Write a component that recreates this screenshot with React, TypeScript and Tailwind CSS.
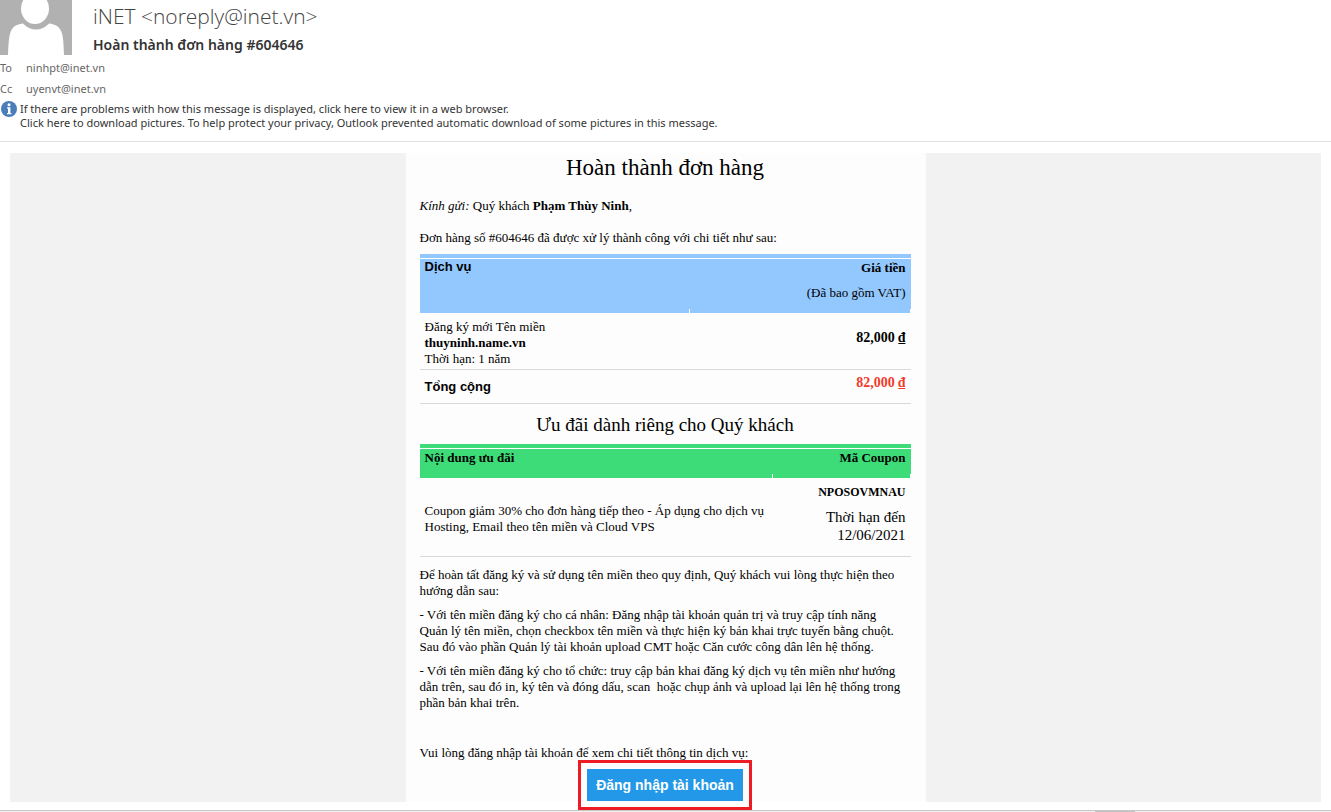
import type { ReactNode } from "react";

const notices = [
  "If there are problems with how this message is displayed, click here to view it in a web browser.",
  "Click here to download pictures. To help protect your privacy, Outlook prevented automatic download of some pictures in this message.",
];

const Avatar = () => (
  <svg viewBox="0 0 72 55" className="h-[55px] w-[72px] shrink-0" aria-hidden="true">
    <rect width="72" height="55" fill="#b1b1b1" />
    <ellipse cx="35" cy="8.500" rx="14" ry="15.500" fill="#fff" />
    <path
      d="M8 55 C8.500 43 9 35 11 31 C13 26 18 24 23 23.500 C27 27.500 31 29.500 36 29.500 C41 29.500 45 27.500 49 23.500 C54 24 59 26 61 31 C63.500 36 63.500 44 64 55 Z"
      fill="#fff"
    />
  </svg>
);

const InfoIcon = () => (
  <svg viewBox="0 0 16 16" className="h-4 w-4 shrink-0" aria-hidden="true">
    <circle cx="8" cy="8" r="8" fill="#4a7ebb" />
    <circle cx="8" cy="3.800" r="1.500" fill="#fff" />
    <path d="M6 6.200h3.400v5.800h1v1.200H6v-1.200h1V7.400H6z" fill="#fff" />
  </svg>
);

const MailHeader = () => (
  <header className="border-b border-[#e1e1e1] pb-[11px] font-['Noto_Sans','Open_Sans',sans-serif] text-[11px] text-[#666]">
    <div className="flex gap-[21px]">
      <Avatar />
      <div>
        <h1 className="pt-[3px] font-['Open_Sans',sans-serif] text-[21px] leading-[26px] font-light text-[#444]">
          iNET &lt;noreply@inet.vn&gt;
        </h1>
        <p className="pt-[6px] font-['Noto_Sans',sans-serif] text-[14px] leading-5 font-semibold text-[#333]">
          Hoàn thành đơn hàng #604646
        </p>
      </div>
    </div>
    <dl className="grid grid-cols-[26px_1fr] pt-[2px] leading-[21px]">
      <dt>To</dt>
      <dd>ninhpt@inet.vn</dd>
      <dt>Cc</dt>
      <dd>uyenvt@inet.vn</dd>
    </dl>
    <div className="flex gap-[3px] pt-[2px] pl-px text-[#333]">
      <InfoIcon />
      <div className="pt-px leading-[14px]">
        {notices.map((notice) => (
          <p key={notice}>{notice}</p>
        ))}
      </div>
    </div>
  </header>
);

const Paragraph = ({ children }: { children: ReactNode }) => (
  <p className="whitespace-pre-wrap">{children}</p>
);

const OrderTable = () => (
  <table className="mt-2 w-full table-fixed border-separate border-spacing-0">
    <colgroup>
      <col className="w-[55%]" />
      <col />
    </colgroup>
    <thead className="bg-[#93c8ff]">
      <tr>
        <td colSpan={2} className="h-[5px] border-b border-white" />
      </tr>
      <tr className="h-[50px] align-top">
        <th className="pl-[5px] text-left font-['Liberation_Sans',sans-serif] text-[13px] leading-4">
          Dịch vụ
        </th>
        <th className="pt-px pr-[5px] text-right">
          Giá tiền
          <p className="pt-[9px] font-normal">(Đã bao gồm VAT)</p>
        </th>
      </tr>
      <tr>
        <td className="h-1 border-r border-white" />
        <td className="h-1 border-r border-white" />
      </tr>
    </thead>
    <tbody>
      <tr className="h-[57px]">
        <td className="border-b border-[#d9d9d9] pt-[3px] pl-[5px]">
          Đăng ký mới Tên miền
          <br />
          <b>thuyninh.name.vn</b>
          <br />
          Thời hạn: 1 năm
        </td>
        <td className="border-b border-[#d9d9d9] pr-[5px] pb-[6px] text-right text-[14px] font-bold">
          82,000 ₫
        </td>
      </tr>
      <tr className="h-[34px]">
        <th className="border-b border-[#d9d9d9] pl-[5px] text-left font-['Liberation_Sans',sans-serif] text-[13px]">
          Tổng cộng
        </th>
        <td className="border-b border-[#d9d9d9] pr-[5px] pb-2 text-right text-[14px] font-bold text-[#f23a2c]">
          82,000 ₫
        </td>
      </tr>
    </tbody>
  </table>
);

const CouponTable = () => (
  <table className="w-full table-fixed border-separate border-spacing-0">
    <colgroup>
      <col className="w-[72%]" />
      <col />
    </colgroup>
    <thead className="bg-[#3ddc78]">
      <tr>
        <td colSpan={2} className="h-[5px] border-b border-white" />
      </tr>
      <tr className="h-[25px] align-top">
        <th className="pt-px pl-[5px] text-left">Nội dung ưu đãi</th>
        <th className="pt-px pr-[5px] text-right">Mã Coupon</th>
      </tr>
      <tr>
        <td className="h-1 border-r border-white" />
        <td className="h-1 border-r border-white" />
      </tr>
    </thead>
    <tbody>
      <tr className="h-[79px]">
        <td className="border-b border-[#d9d9d9] pt-1 pl-[5px]">
          Coupon giảm 30% cho đơn hàng tiếp theo - Áp dụng cho dịch vụ
          <br />
          Hosting, Email theo tên miền và Cloud VPS
        </td>
        <td className="border-b border-[#d9d9d9] pr-[5px] pb-[6px] text-right">
          <b className="text-[12px]">NPOSOVMNAU</b>
          <p className="pt-2 text-[15px] leading-[18px]">
            Thời hạn đến
            <br />
            12/06/2021
          </p>
        </td>
      </tr>
    </tbody>
  </table>
);

const App = () => (
  <div className="min-h-screen bg-white">
    <MailHeader />
    <main className="mx-[10px] mt-[11px] bg-[#f2f2f2]">
      <article className="mx-auto max-w-[520px] bg-[#fdfdfd] pr-[15px] pb-px pl-[14px] font-['Liberation_Serif',serif] text-[13px] leading-4 text-black">
        <h2 className="pt-px text-center text-[23px] leading-7">Hoàn thành đơn hàng</h2>
        <p className="pt-4">
          <i>Kính gửi:</i> Quý khách <b>Phạm Thùy Ninh</b>,
        </p>
        <p className="pt-4">Đơn hàng số #604646 đã được xử lý thành công với chi tiết như sau:</p>
        <OrderTable />
        <h3 className="pt-[9px] pb-[7px] text-center text-[19px] leading-6">
          Ưu đãi dành riêng cho Quý khách
        </h3>
        <CouponTable />
        <div className="space-y-2 pt-[10px]">
          <Paragraph>
            Để hoàn tất đăng ký và sử dụng tên miền theo quy định, Quý khách vui lòng thực hiện theo
            <br />
            hướng dẫn sau:
          </Paragraph>
          <Paragraph>
            - Với tên miền đăng ký cho cá nhân: Đăng nhập tài khoản quản trị và truy cập tính năng
            <br />
            Quản lý tên miền, chọn checkbox tên miền và thực hiện ký bản khai trực tuyến bằng chuột.
            <br />
            Sau đó vào phần Quản lý tài khoản upload CMT hoặc Căn cước công dân lên hệ thống.
          </Paragraph>
          <Paragraph>
            - Với tên miền đăng ký cho tổ chức: truy cập bản khai đăng ký dịch vụ tên miền như hướng
            <br />
            {"dẫn trên, sau đó in, ký tên và đóng dấu, scan  hoặc chụp ảnh và upload lại lên hệ thống trong"}
            <br />
            phần bản khai trên.
          </Paragraph>
        </div>
        <p className="pt-[34px]">Vui lòng đăng nhập tài khoản để xem chi tiết thông tin dịch vụ:</p>
        <div className="flex justify-center pt-2">
          <button
            type="button"
            className="h-8 w-[156px] bg-[#2398e8] font-['Liberation_Sans',sans-serif] text-[14px] font-bold whitespace-nowrap text-white outline-3 outline-offset-6 outline-[#ed1c24]"
          >
            Đăng nhập tài khoản
          </button>
        </div>
      </article>
    </main>
    <footer className="mt-2 h-[2px] border-t border-[#c8c8c8] bg-[#f0f0f0]">
      <div className="mr-[196px] ml-auto h-px w-10 bg-[#c0c0c0]" />
    </footer>
  </div>
);

export default App;
